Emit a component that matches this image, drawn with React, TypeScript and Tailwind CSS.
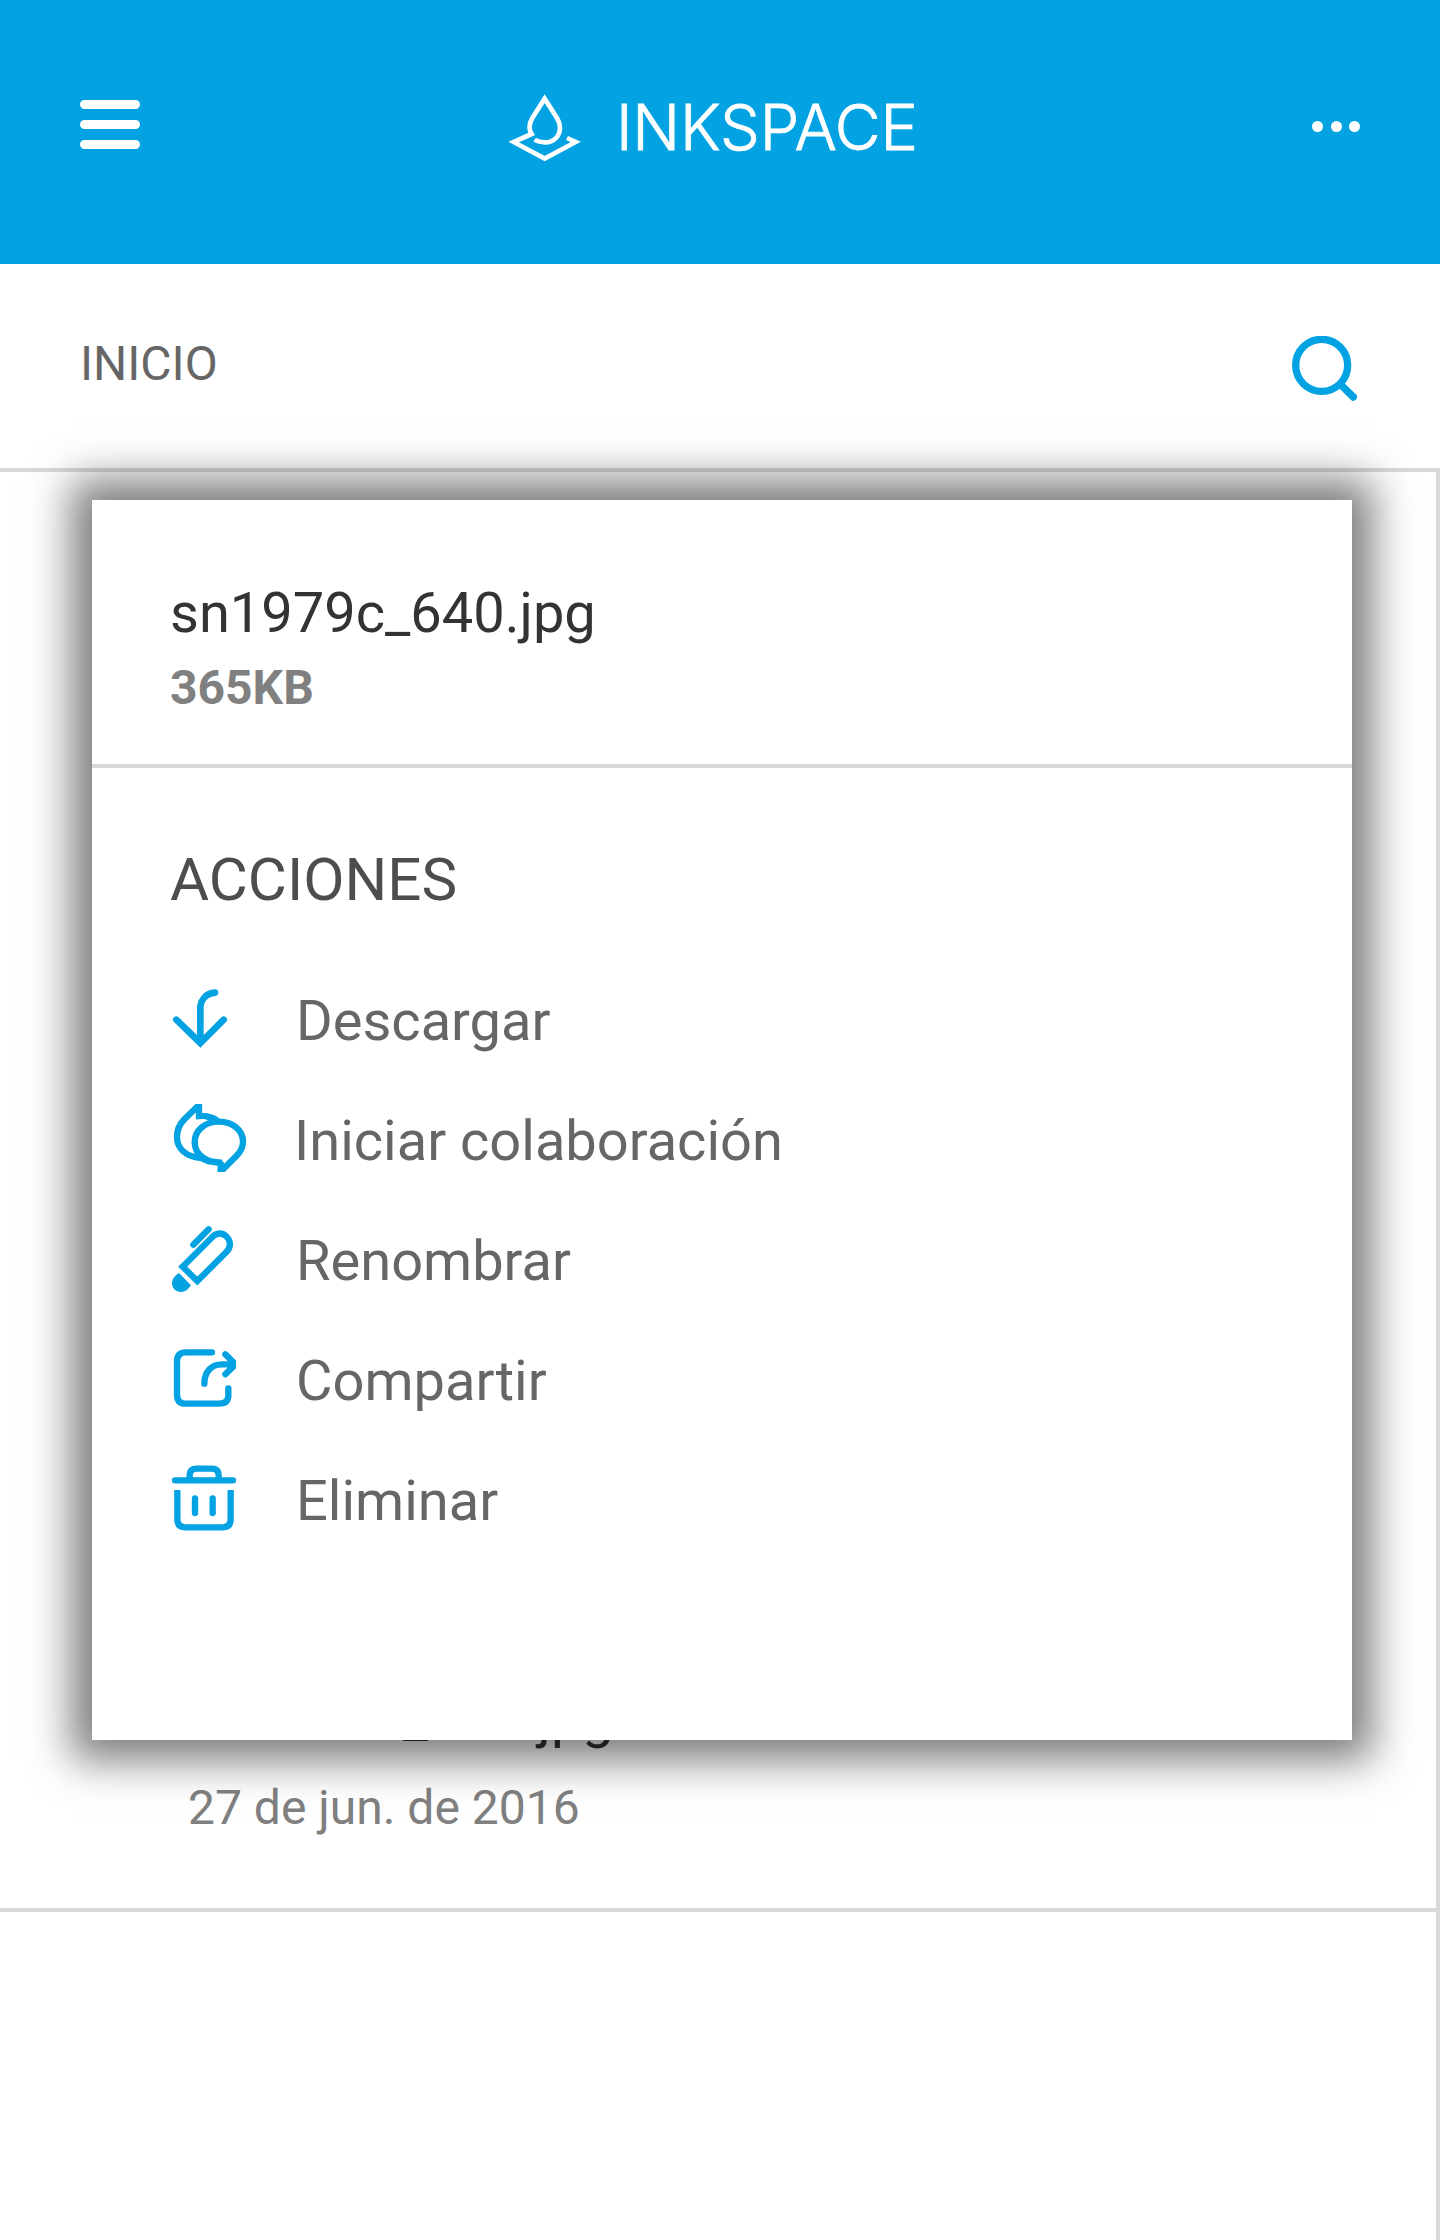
import type { ReactNode } from "react";

function Logo() {
  return (
    <div className="flex items-center">
      <svg className="h-[68px] w-[74px]" viewBox="54 72 222 204" fill="none" stroke="white" strokeWidth="14">
        <path d="M134 209 C143 215 153 217 165 217 C192 217 210 197 210 174 C210 162 206 152 201 144 L164 86 L127 144 C119 158 113 174 125 192 L71 216 L164 266 L257 216 L231 204" />
      </svg>
      <span className="-mt-[2px] ml-[34px] font-['Inter'] text-[63px] leading-[68px] font-light tracking-[-0.2px] text-white [-webkit-text-stroke:0.8px_white]">
        INKSPACE
      </span>
    </div>
  );
}

function Header() {
  return (
    <header className="flex h-[264px] items-start bg-[#02a2e3] px-20">
      <div className="mt-[100px] flex w-[60px] flex-col gap-[11.5px]">
        <span className="h-[8.5px] rounded-full bg-white" />
        <span className="h-[8.5px] rounded-full bg-white" />
        <span className="h-[8.5px] rounded-full bg-white" />
      </div>
      <div className="mt-[94px] ml-[368px]">
        <Logo />
      </div>
      <div className="mt-[121px] ml-auto flex w-12 justify-between">
        <span className="size-[11px] rounded-full bg-white" />
        <span className="size-[11px] rounded-full bg-white" />
        <span className="size-[11px] rounded-full bg-white" />
      </div>
    </header>
  );
}

function SearchIcon() {
  return (
    <svg className="h-[66px] w-[68px]" viewBox="94 766 204 198" fill="none" stroke="#02a2e3" strokeWidth="22">
      <circle cx="186" cy="854" r="78" />
      <path d="M243 912 L281 949" strokeLinecap="round" />
    </svg>
  );
}

function Icon({ viewBox, children }: { viewBox: string; children: ReactNode }) {
  return (
    <svg
      className="h-[120px] w-20 shrink-0"
      viewBox={viewBox}
      fill="none"
      stroke="#02a2e3"
      strokeWidth="19"
    >
      {children}
    </svg>
  );
}

const actions = [
  {
    label: "Descargar",
    shift: "",
    icon: (
      <Icon viewBox="60 423 240 360">
        <path strokeWidth="20" strokeLinecap="round" d="M195 518 C168 520 151 540 151 565 V667 M79 599 L151 669 L221 599" />
      </Icon>
    ),
  },
  {
    label: "Iniciar colaboración",
    shift: "-ml-[2px]",
    icon: (
      <Icon viewBox="15 -42 240 360">
        <clipPath id="bubbles">
          <rect x="20" y="27" width="230" height="204" />
        </clipPath>
        <g clipPath="url(#bubbles)">
          <path d="M167 200 V230 L214 183 C227 170 234 158 234 140 C234 105 202 80 161 80 C120 80 89 106 89 142 C89 178 122 204 172 203" />
          <path d="M155 75 C138 65 122 61 102 63 V30 L56 75 C43 89 36 104 36 126 C36 160 62 187 112 189" />
          <path strokeWidth="14" d="M88 182 C104 190 118 196 134 203 M125 68 C140 70 152 74 165 78" />
        </g>
      </Icon>
    ),
  },
  {
    label: "Renombrar",
    shift: "",
    icon: (
      <Icon viewBox="15 318 240 360">
        <path strokeLinecap="round" d="M85 449 L131 403" />
        <path d="M53 515 L137 431 C150 413 170 411 183 423 C198 437 199 456 184 471 L97 558 Z" />
        <path stroke="none" fill="#02a2e3" d="M42 534 L78 571 C70 584 60 591 48 591 C32 591 21 580 21 565 C21 551 30 542 42 534 Z" />
      </Icon>
    ),
  },
  {
    label: "Compartir",
    shift: "",
    icon: (
      <Icon viewBox="60 63 240 360">
        <clipPath id="share">
          <rect x="60" y="140" width="198" height="200" />
        </clipPath>
        <g clipPath="url(#share)" strokeLinecap="round">
          <path d="M186 157 H108 Q81 157 81 184 V284 Q81 311 108 311 H208 Q235 311 235 286 V265" />
          <path d="M163 251 C163 215 185 193 215 193 H250 M226 163 L256 193 L226 223" />
        </g>
      </Icon>
    ),
  },
  {
    label: "Eliminar",
    shift: "",
    icon: (
      <Icon viewBox="60 423 240 360">
        <path d="M119 536 V526 Q119 506 140 506 H185 Q206 506 206 526 V536" />
        <path d="M82 570 V658 Q82 682 106 682 H218 Q242 682 242 658 V570" />
        <path strokeLinecap="round" d="M75 541 H249 M135 595 V639 M188 595 V639" />
      </Icon>
    ),
  },
];

function ActionsDialog() {
  return (
    <section className="absolute top-[500px] left-[92px] h-[1240px] w-[1260px] bg-white shadow-[0_0_40px_20px_rgba(0,0,0,0.52)]">
      <div className="h-[268px] border-b-4 border-[#d9d9d9] px-[78px] pt-20">
        <h2 className="text-[56px] leading-[66px] text-[#333]">sn1979c_640.jpg</h2>
        <p className="mt-[14px] text-[48px] leading-[56px] font-bold text-[#808080]">365KB</p>
      </div>
      <h3 className="mt-[77px] px-[78px] text-[60px] leading-[70px] text-[#4d4d4d]">ACCIONES</h3>
      <ul className="mt-[46px] px-[78px]">
        {actions.map((a) => (
          <li key={a.label} className="flex h-[120px] items-center">
            {a.icon}
            <span className="ml-[46px] text-[56px] leading-[120px] text-[#666]">
              <span className={a.shift}>{a.label}</span>
            </span>
          </li>
        ))}
      </ul>
    </section>
  );
}

export default function App() {
  return (
    <main className="relative flex h-[2240px] w-[1440px] flex-col overflow-hidden bg-white font-['Roboto',sans-serif]">
      <Header />
      <div className="flex h-[208px] items-start justify-between border-b-4 border-[#d9d9d9] pr-20 pl-20">
        <h1 className="mt-[72px] text-[48px] leading-[56px] text-[#666]">INICIO</h1>
        <div className="mt-[72px] mr-px">
          <SearchIcon />
        </div>
      </div>
      <div className="flex-1 border-r-4 border-[#d9d9d9]">
        <div className="flex h-[1440px] flex-col justify-end border-b-4 border-[#d9d9d9] pb-[72px] pl-[188px]">
          <p className="text-[56px] leading-[66px] text-[#333]">sn1979c_640.jpg</p>
          <p className="mt-[29px] text-[48px] leading-[56px] text-[#808080]">27 de jun. de 2016</p>
        </div>
      </div>
      <ActionsDialog />
    </main>
  );
}
